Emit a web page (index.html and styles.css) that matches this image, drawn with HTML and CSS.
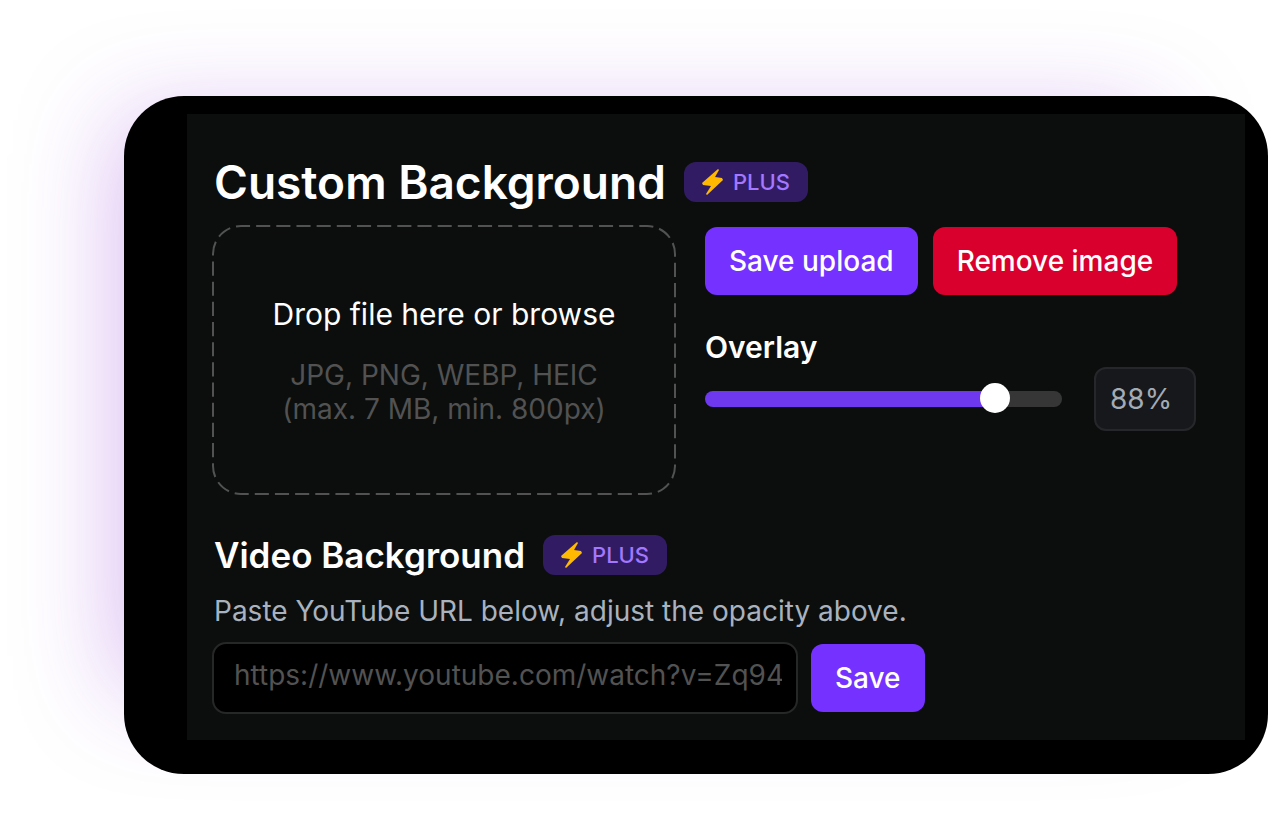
FILE: index.html
```html
<!DOCTYPE html>
<html lang="en">
<head>
    <meta charset="UTF-8">
    <meta name="viewport" content="width=device-width, initial-scale=1.0">
    <title>Custom Background</title>
    <link rel="stylesheet" href="styles.css">
</head>
<body>
    <main class="card">
        <div class="panel">
            <div class="title-row">
                <h1>Custom Background</h1>
                <span class="badge">
                    <svg class="bolt" viewBox="0 0 21 26" aria-hidden="true"><path d="M16 0 0 14 1 16l8 1L4 25l1 1 16-15-1-2-7-1L17 1z"/></svg>
                    PLUS
                </span>
            </div>

            <div class="image-settings">
                <button type="button" class="dropzone">
                    <svg class="dropzone-border" aria-hidden="true"><rect class="dropzone-outline" pathLength="1400"/></svg>
                    <span class="dropzone-title">Drop file here or browse</span>
                    <span class="dropzone-hint">JPG, PNG, WEBP, HEIC<br>(max. 7 MB, min. 800px)</span>
                </button>

                <div class="controls">
                    <div class="actions">
                        <button type="button" class="btn btn-primary">Save upload</button>
                        <button type="button" class="btn btn-danger">Remove image</button>
                    </div>
                    <label class="overlay-label" for="overlay">Overlay</label>
                    <div class="overlay-row">
                        <input type="range" class="slider" id="overlay" min="0" max="100" value="84">
                        <input type="text" class="percent" value="88%" aria-label="Overlay percent">
                    </div>
                </div>
            </div>

            <div class="title-row video-title">
                <h2>Video Background</h2>
                <span class="badge">
                    <svg class="bolt" viewBox="0 0 21 26" aria-hidden="true"><path d="M16 0 0 14 1 16l8 1L4 25l1 1 16-15-1-2-7-1L17 1z"/></svg>
                    PLUS
                </span>
            </div>
            <label class="video-text" for="video-url">Paste YouTube URL below, adjust the opacity above.</label>
            <div class="video-row">
                <input type="text" class="url-input" id="video-url" placeholder="https://www.youtube.com/watch?v=Zq94">
                <button type="button" class="btn btn-primary">Save</button>
            </div>
        </div>
    </main>
</body>
</html>
```
FILE: styles.css
```css
* {
    margin: 0;
    padding: 0;
    box-sizing: border-box;
}

body {
    font-family: Inter, sans-serif;
    background: #fff;
    color: #fff;
    padding: 96px 12px 40px 124px;
}

button,
input {
    font-family: inherit;
}

.card {
    background: #000;
    border-radius: 60px;
    padding: 18px 23px 34px 63px;
    box-shadow: -60px -30px 100px -54px rgba(140, 50, 215, 0.34);
}

.panel {
    background: #0b0e0d;
    padding: 40px 49px 26px 25px;
}

.title-row {
    display: flex;
    align-items: center;
    gap: 18px;
    padding-left: 2px;
}

h1 {
    font-size: 46px;
    font-weight: 600;
    line-height: 56px;
}

h2 {
    font-size: 35px;
    font-weight: 600;
    line-height: 44px;
}

.badge {
    display: flex;
    align-items: center;
    gap: 10px;
    height: 40px;
    padding: 0 18px;
    border-radius: 12px;
    background: #311c64;
    color: #a377ff;
    font-size: 22px;
    font-weight: 500;
}

.bolt {
    width: 21px;
    height: 26px;
    fill: #ffb900;
}

.image-settings {
    display: flex;
    gap: 29px;
    margin-top: 15px;
}

.dropzone {
    position: relative;
    display: flex;
    flex-direction: column;
    align-items: center;
    justify-content: center;
    gap: 24px;
    flex: 0 1 464px;
    height: 270px;
    border: none;
    background: none;
    color: #fff;
    cursor: pointer;
}

.dropzone-border {
    position: absolute;
    inset: 0;
    width: 100%;
    height: 100%;
}

.dropzone-outline {
    x: 1px;
    y: 1px;
    width: calc(100% - 2px);
    height: calc(100% - 2px);
    rx: 28px;
    fill: none;
    stroke: #525252;
    stroke-width: 2;
    stroke-dasharray: 14 6;
    stroke-dashoffset: 5;
}

.dropzone-title {
    font-size: 30px;
    line-height: 40px;
}

.dropzone-hint {
    color: #525252;
    font-size: 28px;
    line-height: 34px;
}

.controls {
    flex: 1;
    padding-top: 2px;
}

.actions {
    display: flex;
    gap: 15px;
}

.btn {
    height: 68px;
    padding: 0 24px;
    border: none;
    border-radius: 12px;
    color: #fff;
    font-size: 28px;
    font-weight: 500;
    white-space: nowrap;
    cursor: pointer;
}

.btn-primary {
    background: #7531ff;
}

.btn-danger {
    background: #d9002d;
}

.overlay-label {
    display: block;
    margin-top: 32px;
    font-size: 30px;
    font-weight: 600;
    line-height: 40px;
}

.overlay-row {
    display: flex;
    align-items: center;
    gap: 32px;
}

.slider {
    flex: 1;
    min-width: 0;
    height: 30px;
    appearance: none;
    background: none;
}

.slider::-webkit-slider-runnable-track {
    height: 16px;
    border-radius: 8px;
    background: linear-gradient(to right, #6d38ee 82%, #363636 82%);
}

.slider::-webkit-slider-thumb {
    appearance: none;
    width: 30px;
    height: 30px;
    margin-top: -8px;
    border-radius: 50%;
    background: #fff;
}

.percent {
    width: 102px;
    height: 64px;
    padding: 0 14px;
    border: 2px solid #26272b;
    border-radius: 12px;
    background: #17181c;
    color: #a3abb5;
    font-size: 28px;
}

.video-title {
    margin-top: 38px;
}

.video-text {
    display: block;
    margin: 17px 0 14px;
    padding-left: 2px;
    color: #a9b2be;
    font-size: 28px;
    line-height: 34px;
}

.video-row {
    display: flex;
    align-items: center;
    gap: 13px;
}

.url-input {
    flex: 0 1 586px;
    min-width: 0;
    height: 72px;
    padding: 0 14px 6px 20px;
    border: 2px solid #262827;
    border-radius: 14px;
    background: #000;
    color: #fff;
    font-size: 28px;
}

.url-input::placeholder {
    color: #525252;
}
```
